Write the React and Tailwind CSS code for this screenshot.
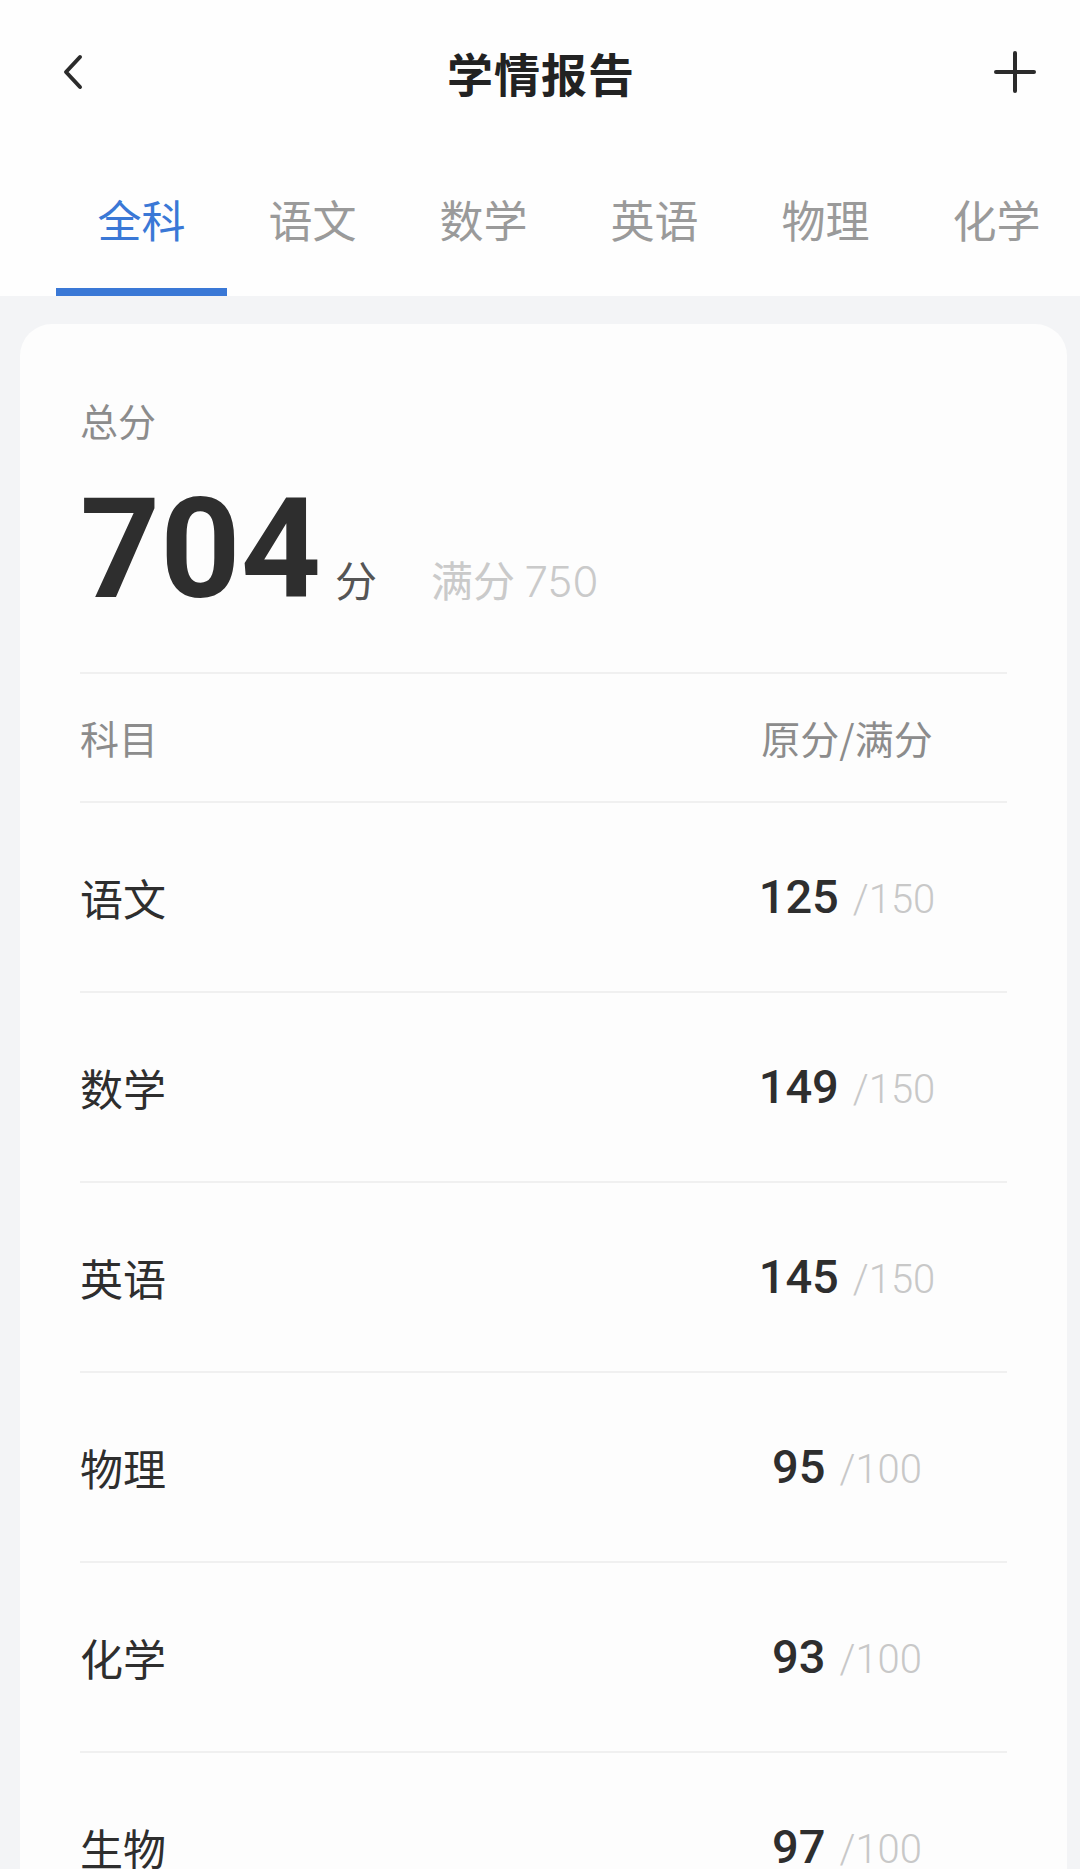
import { useState } from "react";

const cjk = { fontFamily: '"Noto Sans CJK SC", "Noto Sans", sans-serif' };
const num = { fontFamily: 'Roboto, "Noto Sans CJK SC", sans-serif' };

// Tabs across the top
const tabs = ["全科", "语文", "数学", "英语", "物理", "化学", "生物"];

// Score rows
const scores = [
  { name: "语文", score: 125, full: 150 },
  { name: "数学", score: 149, full: 150 },
  { name: "英语", score: 145, full: 150 },
  { name: "物理", score: 95, full: 100 },
  { name: "化学", score: 93, full: 100 },
  { name: "生物", score: 97, full: 100 },
];

const Header = ({ active, setActive }) => (
  <header className="bg-[#fefefe]">
    <div className="h-[144px] flex items-center justify-between pl-[56px] pr-[44px]">
      <svg width="32" height="40" viewBox="0 0 32 40" fill="none" stroke="#2b2b2b" strokeWidth="4" strokeLinecap="round" strokeLinejoin="round">
        <polyline points="24,5 10,20 24,35" />
      </svg>
      <h1 className="text-[46px] font-semibold text-[#222] tracking-[1px]" style={cjk}>学情报告</h1>
      <svg width="42" height="42" viewBox="0 0 42 42" fill="none" stroke="#2b2b2b" strokeWidth="4" strokeLinecap="round">
        <line x1="21" y1="2" x2="21" y2="40" />
        <line x1="2" y1="21" x2="40" y2="21" />
      </svg>
    </div>
    <nav className="h-[152px] flex pl-[56px] overflow-hidden">
      {tabs.map((t) => (
        <button
          key={t}
          onClick={() => setActive(t)}
          className={`w-[171px] shrink-0 h-full pt-[6px] border-b-[8px] flex items-center justify-center text-[44px] ${
            active === t ? "border-[#3a78d6] text-[#3a78d6]" : "border-transparent text-[#9a9a9a]"
          }`}
          style={cjk}
        >
          {t}
        </button>
      ))}
    </nav>
  </header>
);

const ScoreCard = () => (
  <section className="ml-[20px] mr-[13px] mt-[28px] bg-[#fdfdfd] rounded-[32px] px-[60px] pt-[70px]">
    <div className="text-[38px] leading-[52px] text-[#8c8c8c]" style={cjk}>总分</div>
    <div className="flex items-baseline mt-[33px] pb-[53px] border-b-2 border-[#f0f0f0]">
      <span className="text-[140px] leading-none font-bold text-[#2e2e2e]" style={num}>704</span>
      <span className="ml-[14px] text-[42px] text-[#555]" style={cjk}>分</span>
      <span className="ml-[54px] text-[42px] text-[#cacaca]" style={cjk}>
        满分 <span className="font-light" style={{ fontFamily: "Inter, sans-serif" }}>750</span>
      </span>
    </div>

    <div className="h-[129px] flex items-center justify-between border-b-2 border-[#f0f0f0] text-[39px] text-[#8c8c8c]" style={cjk}>
      <span>科目</span>
      <span className="w-[250px] mr-[35px] text-center">原分/满分</span>
    </div>

    {scores.map((s) => (
      <div key={s.name} className="h-[190px] flex items-center justify-between border-b-2 border-[#f0f0f0]">
        <span className="text-[43px] text-[#2e2e2e]" style={cjk}>{s.name}</span>
        <span className="w-[250px] mr-[35px] text-center" style={num}>
          <span className="text-[47px] font-medium text-[#2e2e2e]">{s.score}</span>
          <span className="ml-[14px] text-[40px] font-light text-[#c8c8c8]">/{s.full}</span>
        </span>
      </div>
    ))}
  </section>
);

export default function App() {
  const [active, setActive] = useState("全科");
  return (
    <div className="w-[1080px] h-[1869px] overflow-hidden bg-[#f3f4f6]">
      <Header active={active} setActive={setActive} />
      <ScoreCard />
    </div>
  );
}
